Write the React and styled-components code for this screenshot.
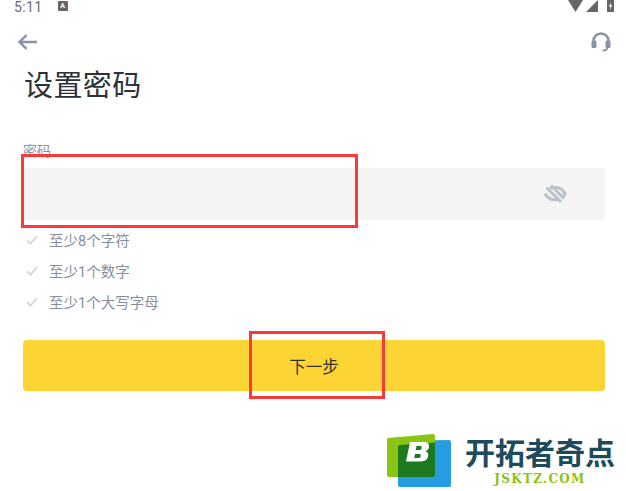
import React from 'react';
import styled, { createGlobalStyle } from 'styled-components';

const GlobalStyle = createGlobalStyle`
  html, body {
    margin: 0;
    padding: 0;
    background: #fff;
  }
  * {
    box-sizing: border-box;
  }
`;

const Page = styled.div`
  position: relative;
  width: 626px;
  height: 491px;
  overflow: hidden;
  font-family: Roboto, "Noto Sans CJK SC", sans-serif;
`;

const StatusBar = styled.div`
  height: 16px;
  padding: 0 12px 0 14px;
  display: flex;
  align-items: flex-start;
  color: #6b6b6b;
`;

const Clock = styled.span`
  font-size: 14px;
  line-height: 16px;
  letter-spacing: 0.4px;
  margin-top: -1px;
`;

const NoticeBadge = styled.span`
  width: 10px;
  height: 10px;
  margin: 1px 0 0 15px;
  background: #666;
  border-radius: 1px;
  color: #fff;
  font-size: 7px;
  font-weight: 700;
  line-height: 10px;
  text-align: center;
`;

const StatusIcons = styled.div`
  margin-left: auto;
  display: flex;
  align-items: flex-start;
  gap: 9px;
`;

const NavBar = styled.div`
  height: 34px;
  margin-top: 9px;
  padding: 0 14px 0 17px;
  display: flex;
  align-items: center;
  justify-content: space-between;
`;

const Title = styled.h1`
  margin: 4px 0 0 24px;
  font-family: "Noto Sans CJK SC", sans-serif;
  font-size: 29px;
  font-weight: 400;
  line-height: 40px;
  color: #2b3139;
  letter-spacing: 0.4px;
`;

const Form = styled.div`
  padding: 0 21px 0 23px;
  margin-top: 38px;
`;

const FieldLabel = styled.div`
  height: 18px;
  font-family: "Noto Sans CJK SC", sans-serif;
  font-size: 14px;
  line-height: 18px;
  color: #8b93a1;
`;

const PasswordBox = styled.div`
  height: 52px;
  margin-top: 9px;
  padding-right: 38px;
  display: flex;
  align-items: center;
  justify-content: flex-end;
  background: #f4f4f4;
  border-radius: 4px;
`;

const Rules = styled.div`
  margin-top: 4px;
`;

const Rule = styled.div`
  height: 31px;
  display: flex;
  align-items: center;
  gap: 11px;
  padding-left: 3px;
  font-family: Roboto, "Noto Sans CJK SC", sans-serif;
  font-size: 14.5px;
  color: #868e9c;
`;

const NextButton = styled.button`
  display: block;
  width: 100%;
  height: 51px;
  margin-top: 23px;
  border: 0;
  border-radius: 4px;
  background: #fcd535;
  font-family: "Noto Sans CJK SC", sans-serif;
  font-size: 16.5px;
  color: #33312a;
`;

const Annotation = styled.div`
  position: absolute;
  left: ${(p) => p.$x}px;
  top: ${(p) => p.$y}px;
  width: ${(p) => p.$w}px;
  height: ${(p) => p.$h}px;
  border: 3px solid #fb3a3a;
`;

const Watermark = styled.div`
  position: absolute;
  left: 386px;
  top: 434px;
  display: flex;
  gap: 13px;
`;

const BrandText = styled.div`
  display: flex;
  flex-direction: column;
  align-items: center;
`;

const BrandName = styled.div`
  font-family: "Noto Sans CJK SC", sans-serif;
  font-size: 30px;
  font-weight: 700;
  line-height: 34px;
  color: #1d4a5c;
`;

const BrandUrl = styled.div`
  margin-top: 5px;
  font-family: "DejaVu Serif", serif;
  font-size: 12px;
  font-weight: 700;
  line-height: 13px;
  letter-spacing: 1.3px;
  color: #8cc212;
`;

const BackIcon = () => (
  <svg width="20" height="16" viewBox="0 0 20 16" fill="none" stroke="#8a93a3" strokeWidth="2.4">
    <path d="M20 8H2.500M9.500 1.200 2.500 8l7 6.800" />
  </svg>
);

const HeadsetIcon = () => (
  <svg width="22" height="22" viewBox="0 0 22 22" fill="none">
    <path d="M3.500 12V10a7.500 7.500 0 0 1 15 0v2" stroke="#8a93a3" strokeWidth="2.600" />
    <rect x="1.500" y="9.500" width="5" height="7.500" rx="1.500" fill="#8a93a3" />
    <rect x="15.500" y="9.500" width="5" height="7.500" rx="1.500" fill="#8a93a3" />
    <path d="M17.500 16c0 2.400-2 3.600-5 3.600" stroke="#8a93a3" strokeWidth="1.800" />
  </svg>
);

const HiddenEyeIcon = () => (
  <svg width="24" height="22" viewBox="0 0 24 22" fill="none" stroke="#bcc2cb" strokeWidth="3">
    <path d="M7 5.500C8.500 4.500 10 4.200 12 4.200c4.600 0 8 2.800 10 6.300-.7 1.400-1.500 2.500-2.600 3.500" />
    <path d="M2 10.500c1.800 3.500 5.400 6.300 10 6.300 1 0 2-.2 3-.5" />
    <path d="M3.500 4.500 18 19M8 2.500 21 15.500" />
  </svg>
);

const CheckIcon = () => (
  <svg width="12" height="10" viewBox="0 0 12 10" fill="none" stroke="#d3d6db" strokeWidth="1.800">
    <path d="M1 5.200 4.400 8.600 11 1.200" />
  </svg>
);

const SignalIcons = () => (
  <>
    <svg width="30" height="12" viewBox="0 0 30 12" fill="#666">
      <path d="M0 0h15L7.500 12z" />
      <path d="M30 0v12H18z" />
    </svg>
    <svg width="7" height="12" viewBox="0 0 7 12">
      <rect width="7" height="12" fill="#666" />
      <path d="M4 1.500 2 6.500h1.500L3 10.500l2-5.500H3.500z" fill="#fff" />
    </svg>
  </>
);

const LogoMark = () => (
  <svg width="66" height="54" viewBox="0 0 66 54">
    <path d="M14 7 63 6a2 2 0 0 1 2 2v43a2 2 0 0 1-2 2H14a2 2 0 0 1-2-2V9a2 2 0 0 1 2-2z" fill="#269ce3" />
    <path d="M2 4 47 0a2 2 0 0 1 2 2v39a2 2 0 0 1-2 2H3a2 2 0 0 1-2-2V6a2 2 0 0 1 1-2z" fill="#8cc414" />
    <path d="M14 11 49 8.500V41a2 2 0 0 1-2 2H12V13a2 2 0 0 1 2-2z" fill="#1d7a1f" />
    <path
      fillRule="evenodd"
      d="M24 8h13c5 0 6.500 2 6 5-.3 2.200-1.500 3.500-3.500 4.300 2.300.8 3 2.500 2.600 4.700-.7 4.500-4 5.500-9 5.500H20zM30.500 12l-.8 4h3.500c1.500 0 2.300-.5 2.500-2 .2-1.500-.4-2-2-2zM29 20l-.8 4h4c1.500 0 2.400-.5 2.600-2 .2-1.500-.6-2-2.200-2z"
      fill="#fff"
    />
  </svg>
);

const rules = ['至少8个字符', '至少1个数字', '至少1个大写字母'];

const App = () => {
  return (
    <Page>
      <GlobalStyle />
      <StatusBar>
        <Clock>5:11</Clock>
        <NoticeBadge>A</NoticeBadge>
        <StatusIcons>
          <SignalIcons />
        </StatusIcons>
      </StatusBar>
      <NavBar>
        <BackIcon />
        <HeadsetIcon />
      </NavBar>
      <Title>设置密码</Title>
      <Form>
        <FieldLabel>密码</FieldLabel>
        <PasswordBox>
          <HiddenEyeIcon />
        </PasswordBox>
        <Rules>
          {rules.map((rule) => (
            <Rule key={rule}>
              <CheckIcon />
              {rule}
            </Rule>
          ))}
        </Rules>
        <NextButton>下一步</NextButton>
      </Form>
      <Annotation $x={21} $y={154} $w={337} $h={74} />
      <Annotation $x={249} $y={331} $w={136} $h={68} />
      <Watermark>
        <LogoMark />
        <BrandText>
          <BrandName>开拓者奇点</BrandName>
          <BrandUrl>JSKTZ.COM</BrandUrl>
        </BrandText>
      </Watermark>
    </Page>
  );
};

export default App;
